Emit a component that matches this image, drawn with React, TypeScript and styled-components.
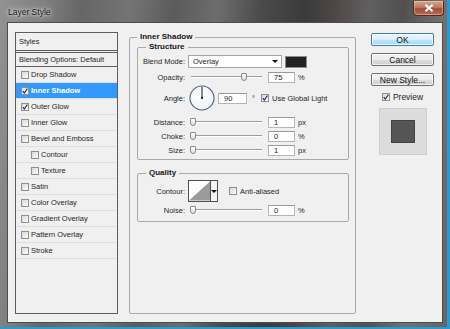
import React from "react";
import styled, { createGlobalStyle } from "styled-components";

const GlobalStyle = createGlobalStyle`
  html, body {
    margin: 0;
    padding: 0;
  }
  body {
    width: 450px;
    height: 329px;
    overflow: hidden;
    background: #1f9fd7;
    font-family: "Liberation Sans", Arial, sans-serif;
    font-size: 7.5px;
    color: #262626;
  }
  * {
    box-sizing: border-box;
  }
`;

const Window = styled.div`
  width: 447px;
  height: 327px;
  display: flex;
  flex-direction: column;
  background: linear-gradient(
    97deg,
    #929292 0%,
    #808080 9%,
    #666666 17%,
    #747474 27%,
    #5b5b5b 36%,
    #6d6d6d 45%,
    #4a4a4a 54%,
    #3b3b3b 63%,
    #4f4746 69%,
    #606060 76%,
    #505050 83%,
    #717171 91%,
    #656565 100%
  );
`;

const TitleBar = styled.div`
  height: 22px;
  flex: none;
  display: flex;
  align-items: flex-start;
  justify-content: space-between;
  padding: 0 3px 0 8px;
`;

const Title = styled.span`
  margin-top: 7px;
  font-size: 8.5px;
  line-height: 10px;
  color: #151515;
  text-shadow: 0 0 3px #fff, 0 0 7px rgba(255, 255, 255, 0.85);
`;

const CloseButton = styled.div`
  margin-top: 1px;
  width: 31px;
  height: 15px;
  border: 1px solid #4b2b22;
  border-top: none;
  border-radius: 0 0 4px 4px;
  background: linear-gradient(#d6a792, #bd7a60 45%, #9f4f38 55%, #b56c53);
  box-shadow: inset 0 0 0 1px rgba(255, 220, 200, 0.4);
  display: flex;
  align-items: center;
  justify-content: center;
`;

const Frame = styled.div`
  flex: 1;
  min-height: 0;
  display: flex;
  padding: 0 4px 4px 7px;
`;

const Content = styled.div`
  flex: 1;
  display: flex;
  align-items: flex-start;
  background: #f0f0f0;
  border: 1px solid #4d4d4d;
  padding: 9px 0 0 7px;
`;

/* left list */

const StyleList = styled.div`
  flex: none;
  width: 103px;
  height: 282px;
  border: 1px solid #5e5e5e;
  background: #f0f0f0;
  display: flex;
  flex-direction: column;
`;

const ListHeader = styled.div`
  height: 18px;
  border-bottom: 1px solid #5e5e5e;
  display: flex;
  align-items: center;
  padding-left: 3px;
`;

const BlendingRow = styled.div`
  height: 15px;
  margin-top: 1px;
  border-top: 1px solid #5e5e5e;
  border-bottom: 1px solid #5e5e5e;
  display: flex;
  align-items: center;
  padding-left: 3px;
`;

const EffectRow = styled.div<{ $selected?: boolean; $sub?: boolean }>`
  height: 16px;
  flex: none;
  display: flex;
  align-items: center;
  gap: 2px;
  padding-left: ${(p) => (p.$sub ? 15 : 5)}px;
  border-bottom: 1px solid #dedede;
  background: ${(p) => (p.$selected ? "#3399ff" : "transparent")};
  color: ${(p) => (p.$selected ? "#fff" : "inherit")};
  font-weight: ${(p) => (p.$selected ? "bold" : "normal")};
`;

/* check box */

const Box = styled.span`
  width: 8px;
  height: 8px;
  flex: none;
  border: 1px solid #8e8f8f;
  background: linear-gradient(135deg, #d9d9d9, #fbfbfb);
  display: inline-flex;
  align-items: center;
  justify-content: center;
`;

const CheckBox = ({ on }: { on?: boolean }) => (
  <Box>
    {on && (
      <svg width="6" height="6" viewBox="0 0 6 6">
        <path d="M0.7 3.1 L2.3 5 L5.4 0.6" stroke="#1c2f5c" strokeWidth="1.1" fill="none" />
      </svg>
    )}
  </Box>
);

/* middle groups */

const EffectGroup = styled.fieldset`
  flex: none;
  margin: 0 0 0 11px;
  padding: 0 6px 0 7px;
  width: 227px;
  height: 282px;
  min-width: 0;
  border: 1px solid #a9a9a9;
  border-radius: 2px;
`;

const GroupTitle = styled.legend<{ $inset: number }>`
  margin-left: ${(p) => p.$inset}px;
  padding: 0 3px;
  font-weight: bold;
  font-size: 8px;
  line-height: 10px;
  color: #151515;
`;

const SubGroup = styled.fieldset<{ $mt: number; $pt: number; $pb: number }>`
  margin: ${(p) => p.$mt}px 0 0;
  padding: ${(p) => p.$pt}px 6px ${(p) => p.$pb}px 2px;
  min-width: 0;
  border: 1px solid #a9a9a9;
  border-radius: 2px;
`;

const Row = styled.div<{ $h: number; $mt?: number }>`
  height: ${(p) => p.$h}px;
  margin-top: ${(p) => p.$mt ?? 0}px;
  display: flex;
  align-items: center;
`;

const Label = styled.span`
  width: 45px;
  flex: none;
  margin-right: 3px;
  text-align: right;
  white-space: nowrap;
`;

const Select = styled.div`
  width: 94px;
  height: 13px;
  border: 1px solid #a6a6a6;
  background: #fff;
  display: flex;
  align-items: center;
  justify-content: space-between;
  padding: 0 3px 0 4px;
`;

const Arrow = styled.span`
  width: 0;
  height: 0;
  border-left: 3px solid transparent;
  border-right: 3px solid transparent;
  border-top: 3px solid #111;
`;

const Swatch = styled.div<{ $color: string }>`
  margin-left: 3px;
  width: 22px;
  height: 12px;
  border: 1px solid #8c8c8c;
  background: ${(p) => p.$color};
`;

const Track = styled.div`
  position: relative;
  width: 74px;
  height: 10px;
  flex: none;
  &::before {
    content: "";
    position: absolute;
    left: 3px;
    right: 0;
    top: 4px;
    height: 1px;
    background: #9c9c9c;
    box-shadow: 0 1px 0 #fff;
  }
`;

const Thumb = styled.span`
  position: absolute;
  top: 1px;
  width: 6px;
  height: 8px;
  border: 1px solid #8a8a8a;
  border-radius: 1px 1px 3px 3px;
  background: linear-gradient(#ffffff, #dcdcdc);
`;

const Slider = ({ value, max }: { value: number; max: number }) => (
  <Track>
    <Thumb style={{ left: 2 + (value / max) * 68 }} />
  </Track>
);

const NumberField = styled.input<{ $w?: number; $ml?: number }>`
  width: ${(p) => p.$w ?? 27}px;
  height: 11px;
  margin: 0 0 0 ${(p) => p.$ml ?? 6}px;
  padding: 0 0 0 5px;
  border: 1px solid #b5b5b5;
  border-top-color: #9a9a9a;
  background: #fff;
  font: inherit;
  color: #1e1e1e;
  outline: none;
`;

const Unit = styled.span<{ $ml?: number }>`
  margin-left: ${(p) => p.$ml ?? 3}px;
`;

const Inline = styled.span<{ $ml: number }>`
  margin-left: ${(p) => p.$ml}px;
  display: inline-flex;
  align-items: center;
  gap: 3px;
  white-space: nowrap;
`;

const Dial = styled.svg`
  margin-left: 1px;
  flex: none;
`;

const ContourPicker = styled.div`
  width: 30px;
  height: 22px;
  display: flex;
  border: 1px solid #4f4f4f;
  background: #fff;
`;

const ContourDrop = styled.div`
  width: 7px;
  border-left: 1px solid #4f4f4f;
  display: flex;
  align-items: center;
  justify-content: center;
  background: #f4f4f4;
`;

/* right column */

const Side = styled.div`
  flex: none;
  width: 63px;
  margin: 1px 0 0 15px;
  display: flex;
  flex-direction: column;
  align-items: center;
  font-size: 8.5px;
`;

const Button = styled.div<{ $primary?: boolean }>`
  width: 63px;
  height: 13px;
  display: flex;
  align-items: center;
  justify-content: center;
  border-radius: 2px;
  border: 1px solid ${(p) => (p.$primary ? "#3c7fb1" : "#707070")};
  background: ${(p) =>
    p.$primary
      ? "linear-gradient(#eaf6fd, #d9f0fc 50%, #bee6fd 51%, #a7d9f5)"
      : "linear-gradient(#f2f2f2, #ebebeb 50%, #dddddd 51%, #cfcfcf)"};
  box-shadow: inset 0 0 0 1px rgba(255, 255, 255, 0.7);
  color: #111;
  & + & {
    margin-top: 7px;
  }
`;

const PreviewToggle = styled.div`
  margin-top: 6px;
  height: 10px;
  display: flex;
  align-items: center;
  gap: 3px;
`;

const PreviewBox = styled.div`
  margin-top: 6px;
  width: 48px;
  height: 47px;
  border: 1px solid #cfcfcf;
  background: #dcdcdc;
  display: flex;
  align-items: center;
  justify-content: center;
`;

const PreviewSquare = styled.div`
  width: 24px;
  height: 23px;
  background: #555555;
  border: 1px solid #404040;
`;

const effects = [
  { label: "Drop Shadow" },
  { label: "Inner Shadow", checked: true, selected: true },
  { label: "Outer Glow", checked: true },
  { label: "Inner Glow" },
  { label: "Bevel and Emboss" },
  { label: "Contour", sub: true },
  { label: "Texture", sub: true },
  { label: "Satin" },
  { label: "Color Overlay" },
  { label: "Gradient Overlay" },
  { label: "Pattern Overlay" },
  { label: "Stroke" },
];

export default function App() {
  return (
    <>
      <GlobalStyle />
      <Window>
        <TitleBar>
          <Title>Layer Style</Title>
          <CloseButton>
            <svg width="10" height="8" viewBox="0 0 10 8">
              <path d="M1.5 0.8 L8.5 7.2 M8.5 0.8 L1.5 7.2" stroke="#fff" strokeWidth="2" />
            </svg>
          </CloseButton>
        </TitleBar>
        <Frame>
          <Content>
            <StyleList>
              <ListHeader>Styles</ListHeader>
              <BlendingRow>Blending Options: Default</BlendingRow>
              {effects.map((e) => (
                <EffectRow key={e.label} $selected={e.selected} $sub={e.sub}>
                  <CheckBox on={e.checked} />
                  {e.label}
                </EffectRow>
              ))}
            </StyleList>

            <EffectGroup>
              <GroupTitle $inset={0}>Inner Shadow</GroupTitle>
              <SubGroup $mt={0} $pt={3} $pb={4}>
                <GroupTitle $inset={6}>Structure</GroupTitle>
                <Row $h={13}>
                  <Label>Blend Mode:</Label>
                  <Select>
                    Overlay
                    <Arrow />
                  </Select>
                  <Swatch $color="#222222" />
                </Row>
                <Row $h={10} $mt={4}>
                  <Label>Opacity:</Label>
                  <Slider value={75} max={100} />
                  <NumberField readOnly value="75" />
                  <Unit>%</Unit>
                </Row>
                <Row $h={26} $mt={3}>
                  <Label>Angle:</Label>
                  <Dial width="26" height="26" viewBox="0 0 26 26">
                    <defs>
                      <radialGradient id="dialFill" cx="40%" cy="35%" r="70%">
                        <stop offset="0%" stopColor="#ffffff" />
                        <stop offset="100%" stopColor="#eef1f5" />
                      </radialGradient>
                    </defs>
                    <circle cx="13" cy="13" r="12" fill="url(#dialFill)" stroke="#4f6180" strokeWidth="1.1" />
                    <line x1="13" y1="13" x2="13" y2="2" stroke="#111" strokeWidth="1" />
                    <circle cx="13" cy="13" r="1.1" fill="#111" />
                  </Dial>
                  <NumberField readOnly value="90" $w={29} $ml={3} />
                  <Unit $ml={5}>°</Unit>
                  <Inline $ml={6}>
                    <CheckBox on />
                    Use Global Light
                  </Inline>
                </Row>
                <Row $h={10} $mt={6}>
                  <Label>Distance:</Label>
                  <Slider value={0} max={250} />
                  <NumberField readOnly value="1" />
                  <Unit>px</Unit>
                </Row>
                <Row $h={10} $mt={4}>
                  <Label>Choke:</Label>
                  <Slider value={0} max={100} />
                  <NumberField readOnly value="0" />
                  <Unit>%</Unit>
                </Row>
                <Row $h={10} $mt={4}>
                  <Label>Size:</Label>
                  <Slider value={0} max={250} />
                  <NumberField readOnly value="1" />
                  <Unit>px</Unit>
                </Row>
              </SubGroup>

              <SubGroup $mt={8} $pt={2} $pb={6}>
                <GroupTitle $inset={6}>Quality</GroupTitle>
                <Row $h={22}>
                  <Label>Contour:</Label>
                  <ContourPicker>
                    <svg width="22" height="20" viewBox="0 0 22 20">
                      <polygon points="0,20 22,0 22,20" fill="#9b9b9b" />
                    </svg>
                    <ContourDrop>
                      <Arrow />
                    </ContourDrop>
                  </ContourPicker>
                  <Inline $ml={11}>
                    <CheckBox />
                    Anti-aliased
                  </Inline>
                </Row>
                <Row $h={10} $mt={3}>
                  <Label>Noise:</Label>
                  <Slider value={0} max={100} />
                  <NumberField readOnly value="0" />
                  <Unit>%</Unit>
                </Row>
              </SubGroup>
            </EffectGroup>

            <Side>
              <Button $primary>OK</Button>
              <Button>Cancel</Button>
              <Button>New Style...</Button>
              <PreviewToggle>
                <CheckBox on />
                Preview
              </PreviewToggle>
              <PreviewBox>
                <PreviewSquare />
              </PreviewBox>
            </Side>
          </Content>
        </Frame>
      </Window>
    </>
  );
}
